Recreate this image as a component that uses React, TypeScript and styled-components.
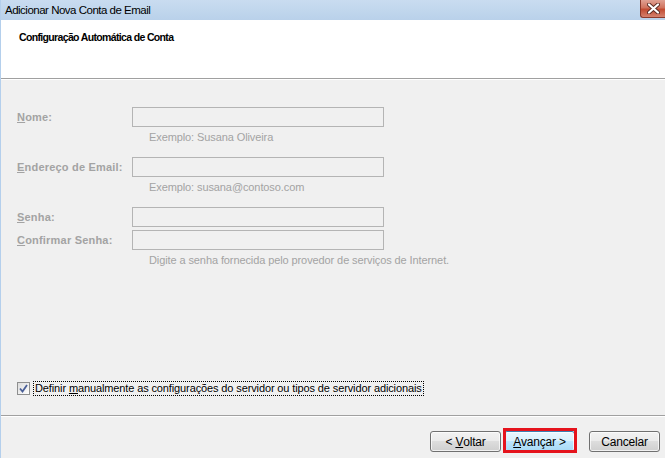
import styled, { createGlobalStyle } from "styled-components";

const GlobalStyle = createGlobalStyle`
  html, body {
    margin: 0;
    padding: 0;
    background: #f0f0f0;
  }
  * {
    box-sizing: border-box;
  }
`;

const Window = styled.div`
  width: 665px;
  height: 458px;
  display: flex;
  flex-direction: column;
  border-left: 1px solid #b4cfec;
  background: #f0f0f0;
  font-family: "Liberation Sans", Arial, sans-serif;
  font-size: 11px;
  overflow: hidden;
`;

const TitleBar = styled.div`
  height: 20px;
  display: flex;
  align-items: center;
  justify-content: space-between;
  padding-left: 4px;
  background: linear-gradient(to bottom, #c9dcf0, #b9d1ea);
  color: #000;
  font-size: 11.5px;
  letter-spacing: -0.5px;
`;

const CloseButton = styled.div`
  width: 25px;
  height: 18px;
  align-self: flex-start;
  display: flex;
  align-items: center;
  justify-content: center;
  background: linear-gradient(to bottom, #e0a193 0%, #d0735e 45%, #c24b32 55%, #d4826f 100%);
  border: 1px solid #8b3a2c;
  border-top: none;
  border-right: none;
  border-bottom-left-radius: 3px;
`;

const Header = styled.div`
  height: 59px;
  background: #fff;
  padding: 11px 0 0 18px;
  border-bottom: 1px solid #a0a0a0;
  box-shadow: 0 1px 0 #fff;
`;

const HeaderTitle = styled.div`
  font-weight: bold;
  font-size: 10.5px;
  letter-spacing: -0.65px;
  color: #000;
`;

const Body = styled.div`
  flex: 1;
  display: flex;
  flex-direction: column;
  padding: 28px 0 0 16px;
`;

const Form = styled.div`
  display: grid;
  grid-template-columns: 115px 252px;
  align-items: center;
`;

const Label = styled.div<{ $gap?: number }>`
  font-weight: bold;
  color: #a3a3a3;
  letter-spacing: 0.2px;
  margin-top: ${(p) => p.$gap ?? 0}px;
`;

const Input = styled.div<{ $gap?: number }>`
  height: 20px;
  border: 1px solid #b4b4b4;
  background: #f0f0f0;
  margin-top: ${(p) => p.$gap ?? 0}px;
`;

const Hint = styled.div`
  grid-column: 2 / span 1;
  white-space: nowrap;
  color: #a3a3a3;
  padding-left: 17px;
  margin-top: 4px;
  height: 16px;
  letter-spacing: -0.1px;
`;

const Key = styled.span`
  text-decoration: underline;
`;

const CheckRow = styled.label`
  margin-top: auto;
  margin-bottom: 19px;
  display: flex;
  align-items: center;
  gap: 3px;
  color: #000;
  letter-spacing: -0.12px;
`;

const CheckBox = styled.span`
  width: 13px;
  height: 13px;
  border: 1px solid #8e8f8f;
  background: linear-gradient(135deg, #dcdcdc, #fff);
  display: flex;
  align-items: center;
  justify-content: center;
`;

const CheckText = styled.span`
  border: 1px dotted #000;
  padding: 0 1px;
  line-height: 13px;
`;

const Footer = styled.div`
  height: 43px;
  border-top: 1px solid #a0a0a0;
  box-shadow: inset 0 1px 0 #fff;
  display: flex;
  justify-content: flex-end;
  align-items: flex-start;
  padding: 15px 5px 0 0;
`;

const Button = styled.div<{ $primary?: boolean; $gapLeft?: number }>`
  position: relative;
  width: 71px;
  height: 21px;
  margin-left: ${(p) => p.$gapLeft ?? 0}px;
  display: flex;
  align-items: center;
  justify-content: center;
  font-size: 12px;
  letter-spacing: -0.2px;
  color: #000;
  border: 1px solid ${(p) => (p.$primary ? "#3c7fb1" : "#707070")};
  border-radius: 3px;
  background: ${(p) =>
    p.$primary
      ? "linear-gradient(to bottom, #eaf6fd 0%, #d9f0fc 45%, #bee6fd 50%, #a7d9f5 100%)"
      : "linear-gradient(to bottom, #f2f2f2 0%, #ebebeb 45%, #dddddd 50%, #cfcfcf 100%)"};
  box-shadow: inset 0 0 0 1px rgba(255, 255, 255, 0.7);
`;

const Highlight = styled.div`
  position: absolute;
  top: -4px;
  bottom: -2px;
  left: -2px;
  right: -3px;
  border: 3px solid #e5131c;
  pointer-events: none;
`;

export default function App() {
  return (
    <>
      <GlobalStyle />
      <Window>
        <TitleBar>
          <span>Adicionar Nova Conta de Email</span>
          <CloseButton>
            <svg width="13" height="11" viewBox="0 0 13 11">
              <path
                d="M2 1.5 L11 9.5 M11 1.5 L2 9.5"
                stroke="#5a2a22"
                strokeWidth="4"
                strokeLinecap="round"
              />
              <path
                d="M2 1.5 L11 9.5 M11 1.5 L2 9.5"
                stroke="#fff"
                strokeWidth="2.2"
                strokeLinecap="round"
              />
            </svg>
          </CloseButton>
        </TitleBar>
        <Header>
          <HeaderTitle>Configuração Automática de Conta</HeaderTitle>
        </Header>
        <Body>
          <Form>
            <Label>
              <Key>N</Key>ome:
            </Label>
            <Input />
            <Hint>Exemplo: Susana Oliveira</Hint>
            <Label $gap={10}>
              <Key>E</Key>ndereço de Email:
            </Label>
            <Input $gap={10} />
            <Hint>Exemplo: susana@contoso.com</Hint>
            <Label $gap={10}>
              <Key>S</Key>enha:
            </Label>
            <Input $gap={10} />
            <Label $gap={3}>
              <Key>C</Key>onfirmar Senha:
            </Label>
            <Input $gap={3} />
            <Hint>Digite a senha fornecida pelo provedor de serviços de Internet.</Hint>
          </Form>
          <CheckRow>
            <CheckBox>
              <svg width="9" height="9" viewBox="0 0 9 9">
                <path
                  d="M1 4.5 L3.5 7.5 L8 1"
                  fill="none"
                  stroke="#4a5f97"
                  strokeWidth="1.8"
                />
              </svg>
            </CheckBox>
            <CheckText>
              Definir <Key>m</Key>anualmente as configurações do servidor ou tipos de servidor adicionais
            </CheckText>
          </CheckRow>
        </Body>
        <Footer>
          <Button>
            &lt;&nbsp;<Key>V</Key>oltar
          </Button>
          <Button $primary $gapLeft={3}>
            <Key>A</Key>vançar &gt;
            <Highlight />
          </Button>
          <Button $gapLeft={14}>Cancelar</Button>
        </Footer>
      </Window>
    </>
  );
}
